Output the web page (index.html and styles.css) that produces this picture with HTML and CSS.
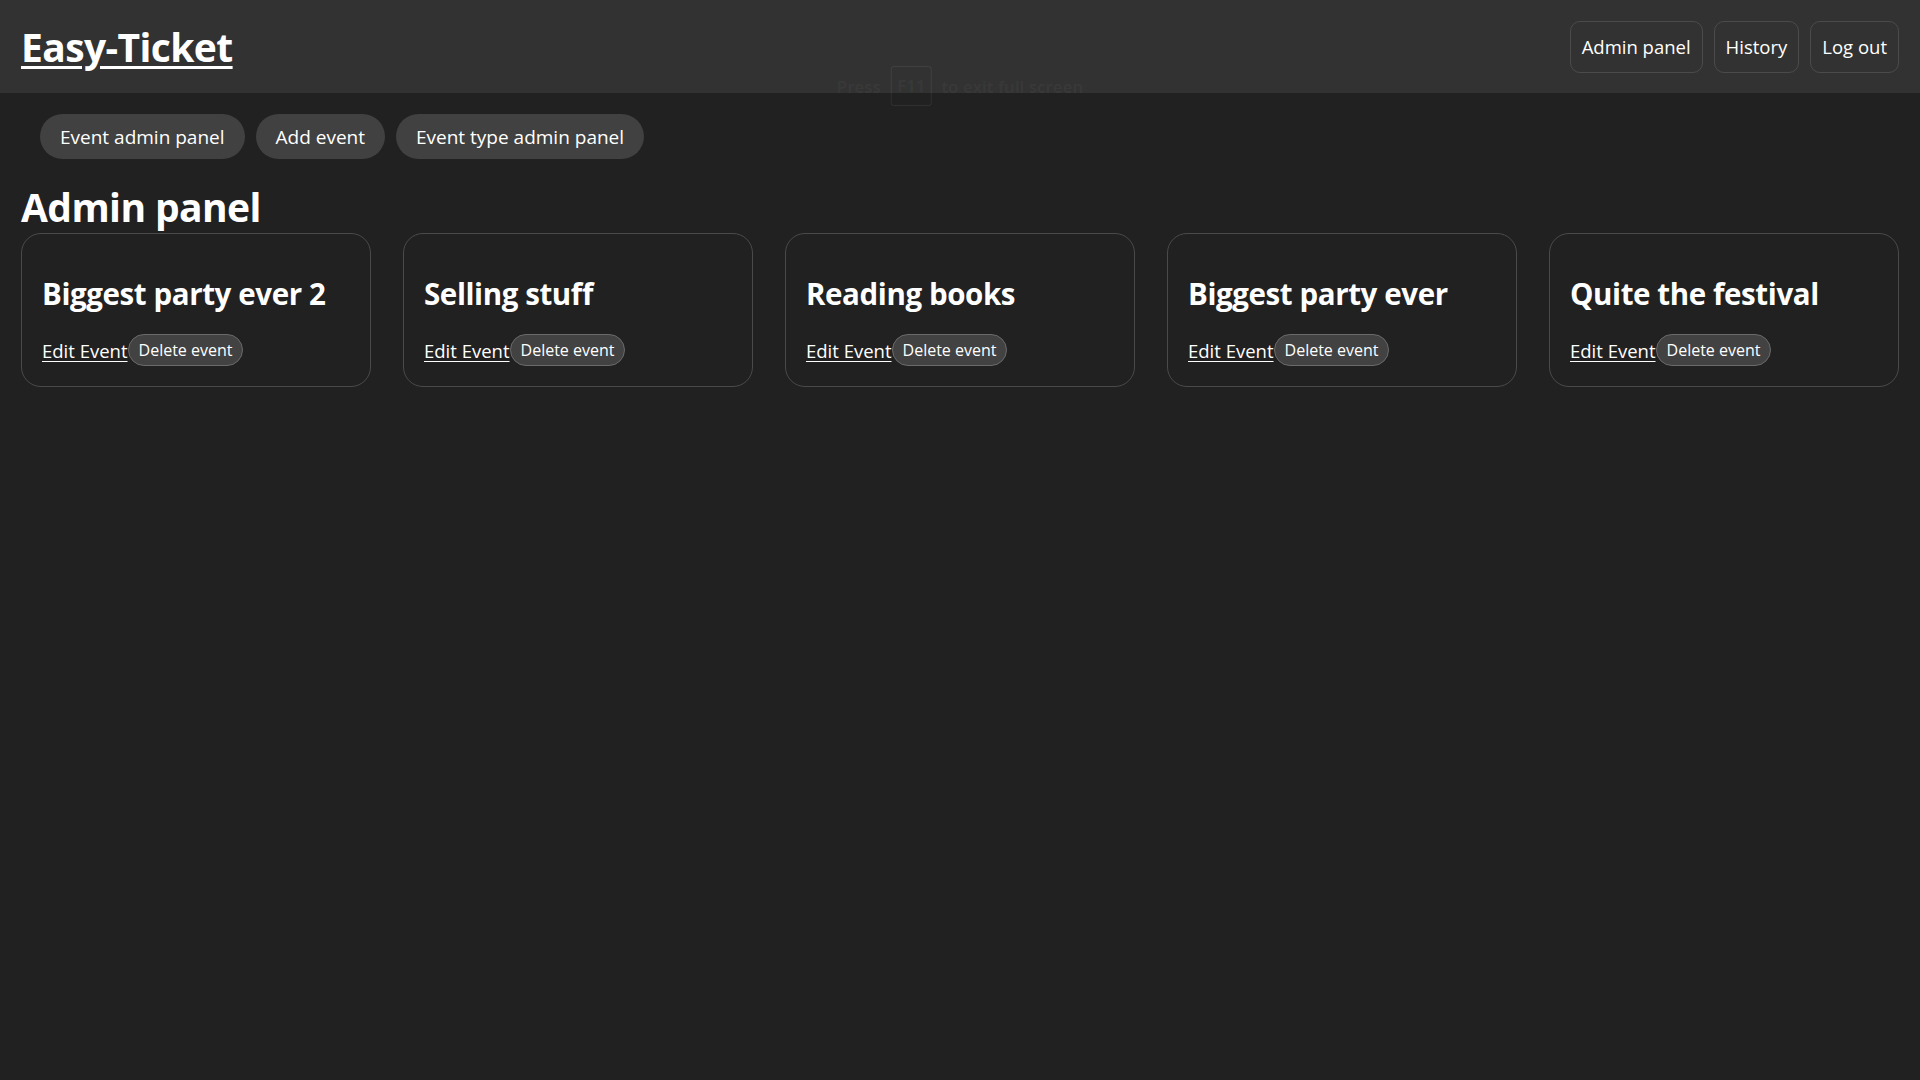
FILE: index.html
```html
<!DOCTYPE html>
<html lang="en">
<head>
<meta charset="utf-8">
<title>Easy-Ticket</title>
<link rel="stylesheet" href="styles.css">
</head>
<body>
<header class="topbar">
  <a class="brand" href="#">Easy-Ticket</a>
  <nav class="topnav">
    <button class="topbtn">Admin panel</button>
    <button class="topbtn">History</button>
    <button class="topbtn">Log out</button>
  </nav>
</header>
<div class="fs-hint"><span>Press</span><span class="key">F11</span><span>to exit full screen</span></div>
<main class="page">
  <nav class="subnav">
    <button class="pill">Event admin panel</button>
    <button class="pill">Add event</button>
    <button class="pill">Event type admin panel</button>
  </nav>
  <h1 class="page-title">Admin panel</h1>
  <section class="cards">
    <article class="card">
      <h2 class="card-title">Biggest party ever 2</h2>
      <div class="actions"><a class="edit" href="#">Edit Event</a><button class="del">Delete event</button></div>
    </article>
    <article class="card">
      <h2 class="card-title">Selling stuff</h2>
      <div class="actions"><a class="edit" href="#">Edit Event</a><button class="del">Delete event</button></div>
    </article>
    <article class="card">
      <h2 class="card-title">Reading books</h2>
      <div class="actions"><a class="edit" href="#">Edit Event</a><button class="del">Delete event</button></div>
    </article>
    <article class="card">
      <h2 class="card-title">Biggest party ever</h2>
      <div class="actions"><a class="edit" href="#">Edit Event</a><button class="del">Delete event</button></div>
    </article>
    <article class="card">
      <h2 class="card-title">Quite the festival</h2>
      <div class="actions"><a class="edit" href="#">Edit Event</a><button class="del">Delete event</button></div>
    </article>
  </section>
</main>
</body>
</html>
```
FILE: styles.css
```css
* { box-sizing: border-box; }
html, body { margin: 0; padding: 0; }
body {
  background: #212121;
  color: #ffffff;
  font-family: "Open Sans", "Noto Sans", sans-serif;
  min-height: 1080px;
  position: relative;
}
button { font-family: inherit; color: #fff; cursor: pointer; }

.topbar {
  height: 93px;
  background: #323232;
  display: flex;
  align-items: center;
  justify-content: space-between;
  padding: 0 21px;
}
.brand {
  color: #fff;
  font-size: 39px;
  font-weight: 700;
  line-height: 48px;
  letter-spacing: -0.6px;
  text-decoration: underline;
  text-decoration-thickness: 3px;
  text-underline-offset: 4px;
}
.topnav { display: flex; gap: 11px; }
.topbtn {
  height: 52px;
  padding: 0 11px;
  background: transparent;
  border: 1px solid #4b4b4b;
  border-radius: 10px;
  font-size: 18.5px;
}

.fs-hint {
  position: absolute;
  top: 66px;
  left: 50%;
  transform: translateX(-50%);
  display: flex;
  align-items: center;
  gap: 10px;
  font-size: 17px;
  font-weight: 600;
  color: rgba(255,255,255,0.055);
  pointer-events: none;
}
.fs-hint .key {
  border: 1px solid rgba(255,255,255,0.07);
  border-radius: 3px;
  padding: 7px 5px;
  line-height: 24px;
}

.page { padding: 0 21px; }
.subnav {
  display: flex;
  gap: 11px;
  padding: 21px 19px 0;
}
.pill {
  height: 45px;
  padding: 0 20px;
  background: #414141;
  border: none;
  border-radius: 23px;
  font-size: 19px;
}
.page-title {
  margin: 24px 0 2px;
  font-size: 39px;
  line-height: 48px;
  font-weight: 700;
  letter-spacing: -0.6px;
}
.cards {
  display: grid;
  grid-template-columns: repeat(5, 1fr);
  gap: 32px;
}
.card {
  border: 1px solid #4a4a4a;
  border-radius: 20px;
  padding: 20px;
}
.card-title {
  margin: 20px 0;
  font-size: 29.5px;
  line-height: 40px;
  font-weight: 700;
  letter-spacing: -0.4px;
}
.actions {
  display: flex;
  align-items: center;
  height: 32px;
}
.edit {
  color: #fff;
  font-size: 18.5px;
  text-decoration: underline;
  text-underline-offset: 3px;
}
.del {
  height: 32px;
  padding: 0 10px;
  background: #424242;
  border: 1px solid #6a6a6a;
  border-radius: 16px;
  font-size: 16px;
}
```
